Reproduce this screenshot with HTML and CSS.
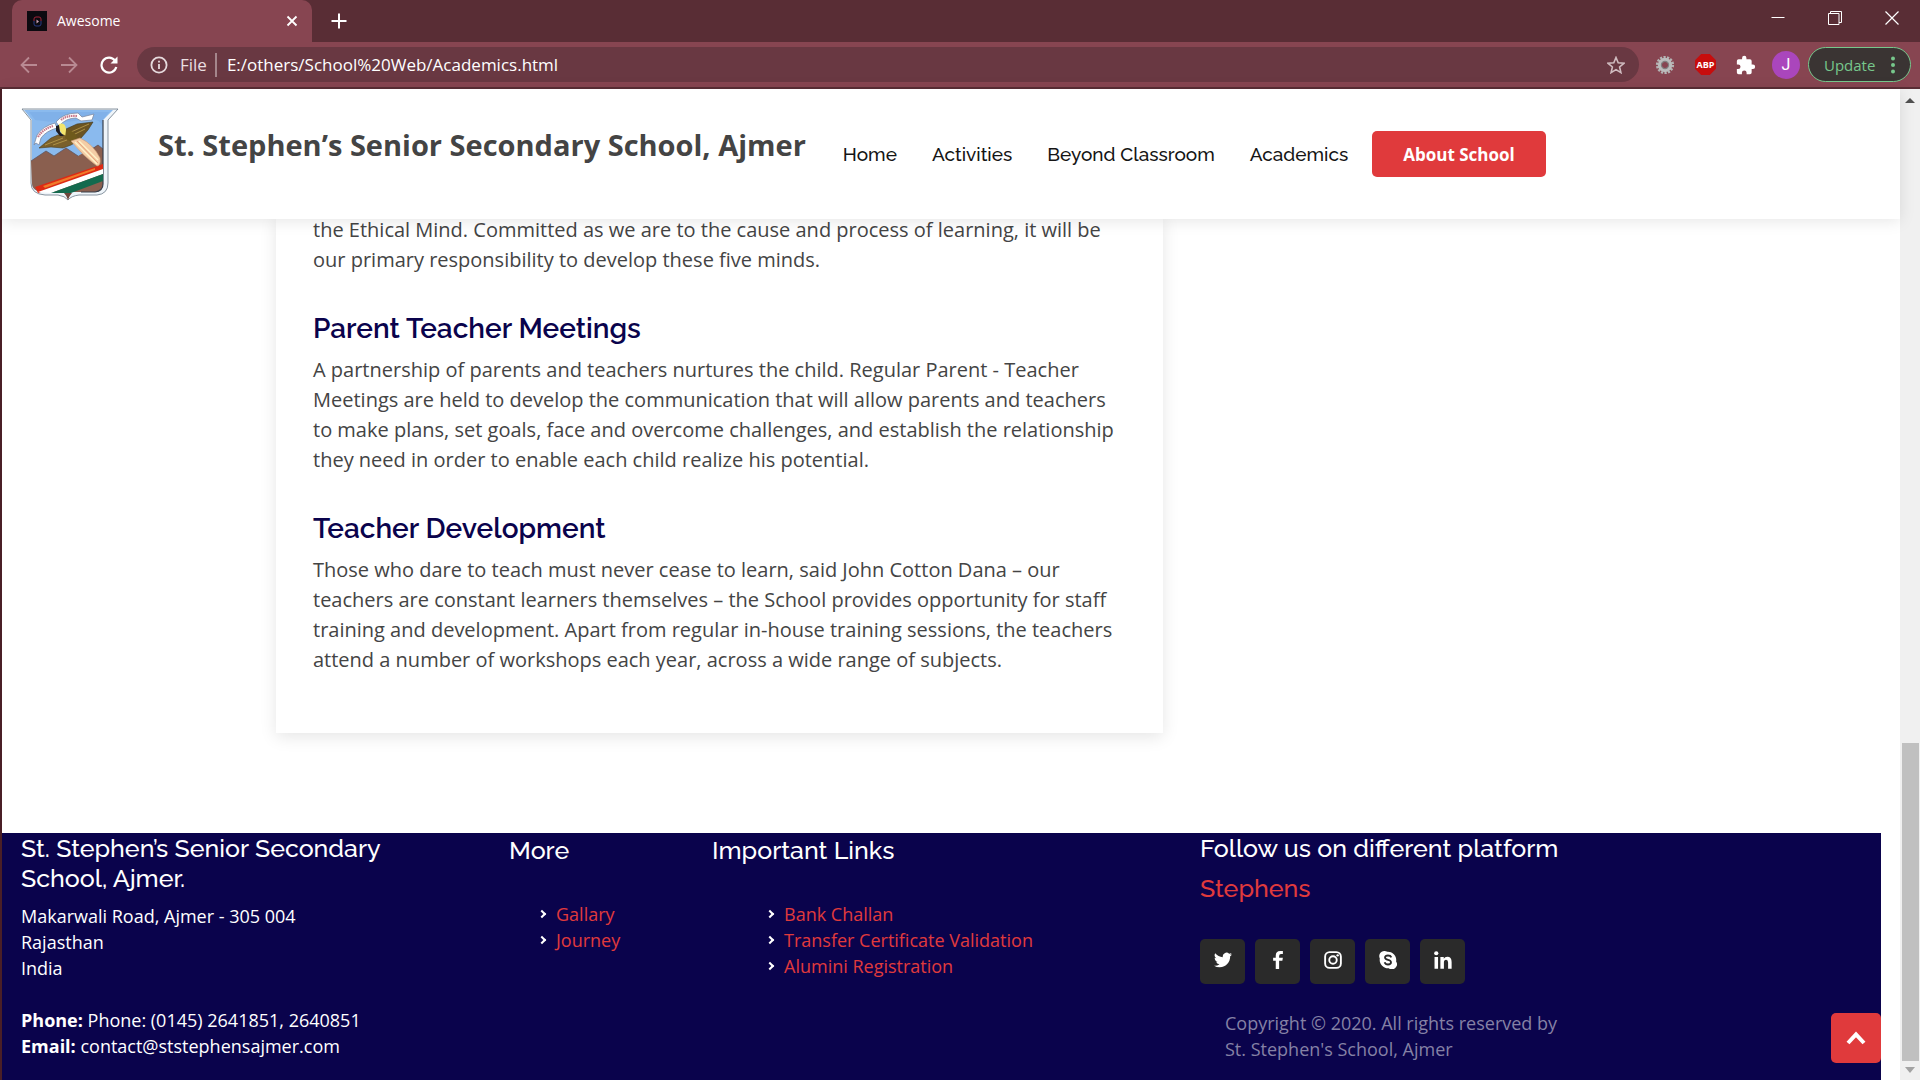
FILE: index.html
```html
<!DOCTYPE html>
<html lang="en">
<head>
<meta charset="utf-8">
<meta name="viewport" content="width=device-width, initial-scale=1">
<title>Awesome</title>
<link rel="stylesheet" href="styles.css">
</head>
<body>
<div class="window">
  <div class="tabstrip">
    <div class="tab">
      <svg class="favicon" viewBox="0 0 20 20" aria-hidden="true"><rect width="20" height="20" fill="#0c0a10"/><path d="M7 10V8q0-2 2-2h3q2 0 2 2v2" fill="none" stroke="#a02438"/><path d="M7 10v3q0 2 2 2h3q2 0 2-2v-3" fill="none" stroke="#273a82"/><path d="M9.500 8.500l2.500 2-2.500 2z" fill="#c8a0b4"/></svg>
      <span class="tab-title">Awesome</span>
      <button class="icon-btn" aria-label="Close tab"><svg width="12" height="12" viewBox="0 0 12 12"><path d="M1.500 1.500l9 9M10.500 1.500l-9 9" stroke="#fff" stroke-width="1.800"/></svg></button>
    </div>
    <button class="icon-btn new-tab" aria-label="New tab"><svg width="16" height="16" viewBox="0 0 16 16"><path d="M8 .5v15M.5 8h15" stroke="#fff" stroke-width="2"/></svg></button>
    <div class="window-controls">
      <button class="icon-btn" aria-label="Minimize"><svg width="14" height="14" viewBox="0 0 14 14"><path d="M.5 6.500h13" stroke="#fff"/></svg></button>
      <button class="icon-btn" aria-label="Restore"><svg width="14" height="14" viewBox="0 0 14 14" fill="none" stroke="#fff"><path d="M.5 2.500h10.500v11H.5zM2.500 2.500v-2h11v11h-2.500"/></svg></button>
      <button class="icon-btn" aria-label="Close"><svg width="14" height="14" viewBox="0 0 14 14"><path d="M.5 .5l13 13M13.500 .5l-13 13" stroke="#fff" stroke-width="1.200"/></svg></button>
    </div>
  </div>

  <div class="toolbar">
    <div class="nav-buttons">
      <button class="icon-btn dim" aria-label="Back"><svg width="18" height="18" viewBox="0 0 18 18"><path d="M17 9H2M9 1.500L1.500 9 9 16.500" fill="none" stroke="currentColor" stroke-width="1.800"/></svg></button>
      <button class="icon-btn dim" aria-label="Forward"><svg width="18" height="18" viewBox="0 0 18 18"><path d="M1 9h15M9 1.500L16.500 9 9 16.500" fill="none" stroke="currentColor" stroke-width="1.800"/></svg></button>
      <button class="icon-btn" aria-label="Reload"><svg width="18" height="18" viewBox="0 0 18 18"><path d="M15 4.500A7.500 7.500 0 1 0 16.300 11" fill="none" stroke="#fff" stroke-width="2.200"/><path d="M17.500 .5v7h-7z" fill="#fff"/></svg></button>
    </div>
    <div class="omnibox">
      <svg width="18" height="18" viewBox="0 0 18 18"><circle cx="9" cy="9" r="7.600" fill="none" stroke="#e6dadd" stroke-width="1.800"/><path d="M9 8v5M9 4.800v1.800" stroke="#e6dadd" stroke-width="1.800"/></svg>
      <label class="scheme" for="address">File</label>
      <input id="address" class="address" type="text" value="E:/others/School%20Web/Academics.html">
      <button class="icon-btn" aria-label="Bookmark"><svg width="18" height="18" viewBox="0 0 18 18"><path d="M9 1.500l2.200 5.300 5.700.5-4.300 3.700 1.300 5.600L9 13.600l-4.900 3 1.300-5.600L1.100 7.300l5.700-.5z" fill="none" stroke="#d0bcc0" stroke-width="1.600"/></svg></button>
    </div>
    <div class="extensions">
      <button class="icon-btn" aria-label="Settings extension"><svg width="20" height="20" viewBox="0 0 20 20"><circle cx="10" cy="10" r="7.800" fill="none" stroke="#b4b4b4" stroke-width="2.600" stroke-dasharray="2.200 1.300"/><circle cx="10" cy="10" r="5.200" fill="none" stroke="#bcbcbc" stroke-width="4"/><circle cx="10" cy="10" r="3.600" fill="none" stroke="#808080" stroke-width="1.200"/></svg></button>
      <button class="icon-btn" aria-label="Adblock Plus"><svg width="21" height="21" viewBox="0 0 21 21"><path d="M6.200 0h8.600L21 6.200v8.600L14.800 21H6.200L0 14.800V6.200z" fill="#c70d0d"/><text class="abp" x="10.500" y="14" text-anchor="middle">ABP</text></svg></button>
      <button class="icon-btn" aria-label="Extensions"><svg width="20" height="20" viewBox="1 0 23 23"><path fill="#fff" d="M20.500 11H19V7a2 2 0 0 0-2-2h-4V3.500a2.500 2.500 0 0 0-5 0V5H4a2 2 0 0 0-2 2v3.800h1.500a2.700 2.700 0 0 1 0 5.400H2V20a2 2 0 0 0 2 2h3.800v-1.500a2.700 2.700 0 0 1 5.400 0V22H17a2 2 0 0 0 2-2v-4h1.500a2.500 2.500 0 0 0 0-5z"/></svg></button>
      <button class="avatar">J</button>
      <button class="update">Update<svg width="4" height="18" viewBox="0 0 4 18" fill="#77c78c"><circle cx="2" cy="2.500" r="2"/><circle cx="2" cy="9" r="2"/><circle cx="2" cy="15.500" r="2"/></svg></button>
    </div>
  </div>

  <div class="viewport">
    <div class="page">
      <header class="site-header">
        <svg class="crest" viewBox="0 0 98 93" aria-label="School crest" role="img">
          <path d="M1 1H97L87 12V75Q87 86 76 87H58Q50 88 47 92Q44 88 37 87H24Q10 86 10 75V12Z" fill="#eef4f9" stroke="#6b7a88" stroke-width=".8"/>
          <path d="M3 2H92L82 12V76Q82 83 74 84H24Q11 84 11 75V12Z" fill="#8abaee"/>
          <path d="M14 12Q40 16 60 12T82 20V12L88 4H8Z" fill="#79abe6" opacity=".6"/>
          <path d="M10 53L25 43 33 48 45 40 57 48 64 44 77 37 82 41V76Q82 83 74 84H24Q11 84 11 75Z" fill="#8a5f4f"/>
          <path d="M10 53L25 43 33 48 45 40 57 48M70 42L77 37 82 41" fill="none" stroke="#5d5560" stroke-width=".8"/>
          <path d="M82 12V76Q82 83 74 84H60" fill="none" stroke="#39404c" stroke-width="1.200"/>
          <path d="M14 79L82 56v6L17 85Z" fill="#dd2a14"/><path d="M22 78L74 60v2L24 80Z" fill="#f07a2a"/>
          <path d="M17 84L82 61v5L30 85Z" fill="#fff"/><path d="M30 85L82 66v7L50 85Z" fill="#146a4e"/>
          <path d="M13 37L16 27Q22 18 34 15L36 20Q25 23 20 30L18 37 15 35Z" fill="#fff" stroke="#7d8ba5" stroke-width=".8"/>
          <path d="M35 14Q42 5 57 5L61 9 73 6 71 12 60 13 55 10Q45 10 38 18Z" fill="#fff" stroke="#7d8ba5" stroke-width=".8"/>
          <path d="M17 29Q22 21 32 18M40 12Q46 7 56 8" fill="none" stroke="#c8788a" stroke-width="2.200" stroke-dasharray="1.500 .7"/>
          <path d="M45 21L56 16 72 14 67 22 60 30 55 34 46 30Z" fill="#6b5422" stroke="#3f351a" stroke-width=".6"/>
          <path d="M44 26L37 27 30 30 18 40 30 39 42 40 50 37 57 33Z" fill="#7a602b" stroke="#4a3c1c" stroke-width=".6"/>
          <path d="M50 24L68 16M52 27L64 21M24 37L42 30M32 37L46 32" stroke="#b3964a" stroke-width=".9"/>
          <path d="M38 16Q44 14 45 21L46 28 41 26 38 21Z" fill="#f3e56c"/>
          <path d="M35 18L38 17 39 24 43 28 39 28 35 23Z" fill="#1e1d22"/>
          <path d="M45 22Q54 22 56 30L50 34 44 30Z" fill="#6f5a1c"/>
          <path d="M50 33L59 30Q72 36 79 50 80 58 76 58 62 48 50 33Z" fill="#f4cda6" stroke="#c99972" stroke-width=".6"/>
          <path d="M54 34L76 56M58 33L77 52" stroke="#fff3c8" stroke-width="1.400"/><path d="M56 33L77 55" stroke="#e0936e" stroke-width=".8"/>
          <path d="M43 85H51Q48 88 47 92 46 88 43 85Z" fill="#6e463c"/>
        </svg>
        <h1 class="site-title">St. Stephen’s Senior Secondary School, Ajmer</h1>
        <nav class="site-nav">
          <a href="#">Home</a><a href="#">Activities</a><a href="#">Beyond Classroom</a><a href="#">Academics</a>
        </nav>
        <a class="about" href="#">About School</a>
      </header>

      <main class="content">
        <article class="card">
          <p>the Ethical Mind. Committed as we are to the cause and process of learning, it will be our primary responsibility to develop these five minds.</p>
          <h2>Parent Teacher Meetings</h2>
          <p>A partnership of parents and teachers nurtures the child. Regular Parent - Teacher Meetings are held to develop the communication that will allow parents and teachers to make plans, set goals, face and overcome challenges, and establish the relationship they need in order to enable each child realize his potential.</p>
          <h2>Teacher Development</h2>
          <p>Those who dare to teach must never cease to learn, said John Cotton Dana – our teachers are constant learners themselves – the School provides opportunity for staff training and development. Apart from regular in-house training sessions, the teachers attend a number of workshops each year, across a wide range of subjects.</p>
        </article>
      </main>

      <footer class="footer">
        <section>
          <h3>St. Stephen’s Senior Secondary<br>School, Ajmer.</h3>
          <address>Makarwali Road, Ajmer - 305 004<br>Rajasthan<br>India<br><br><strong>Phone:</strong> Phone: (0145) 2641851, 2640851<br><strong>Email:</strong> contact@ststephensajmer.com</address>
        </section>
        <section class="link-col">
          <h3>More</h3>
          <ul>
            <li><a href="#">Gallary</a></li>
            <li><a href="#">Journey</a></li>
          </ul>
        </section>
        <section class="link-col wide">
          <h3>Important Links</h3>
          <ul>
            <li><a href="#">Bank Challan</a></li>
            <li><a href="#">Transfer Certificate Validation</a></li>
            <li><a href="#">Alumini Registration</a></li>
          </ul>
        </section>
        <section>
          <h3>Follow us on different platform</h3>
          <h3 class="brand"><a href="#">Stephens</a></h3>
          <div class="social">
            <a href="#" aria-label="Twitter"><svg viewBox="0 0 24 24"><path d="M23.950 4.570a10 10 0 0 1-2.820.770 4.960 4.960 0 0 0 2.160-2.720 9.900 9.900 0 0 1-3.120 1.190 4.920 4.920 0 0 0-8.380 4.480C7.690 8.100 4.070 6.130 1.640 3.160a4.920 4.920 0 0 0 1.520 6.570 4.900 4.900 0 0 1-2.230-.610v.060a4.920 4.920 0 0 0 3.950 4.830 5 5 0 0 1-2.210.080 4.940 4.940 0 0 0 4.600 3.420A9.870 9.870 0 0 1 0 19.540a13.990 13.990 0 0 0 7.550 2.210c9.050 0 14-7.500 14-13.980 0-.210 0-.420-.020-.630a9.940 9.940 0 0 0 2.420-2.570z"/></svg></a>
            <a href="#" aria-label="Facebook"><svg viewBox="0 0 24 24"><path d="M9 24V13H5.500V9H9V6q0-6 6-6h3.500v4H16q-2.500 0-2.500 2.500V9h5l-.7 4h-4.300v11z"/></svg></a>
            <a href="#" aria-label="Instagram"><svg viewBox="0 0 24 24"><rect x="1.500" y="1.500" width="21" height="21" rx="6" fill="none" stroke="#fff" stroke-width="2.500"/><circle cx="12" cy="12" r="5" fill="none" stroke="#fff" stroke-width="2.500"/><circle cx="18.200" cy="5.800" r="1.600"/></svg></a>
            <a href="#" aria-label="Skype"><svg viewBox="0 0 24 24"><path d="M7 0a7 7 0 0 1 4 1.100A11 11 0 0 1 22.800 14 6.700 6.700 0 0 1 13 22.900 11 11 0 0 1 1.100 10 6.800 6.800 0 0 1 7 0z"/><path d="M16.500 8.500q-1-2.500-4.500-2.500-4 0-4 2.800 0 2.200 4 3t4 3.200q0 3-4 3-3.500 0-4.500-3" fill="none" stroke="#2a2a2a" stroke-width="2.400"/></svg></a>
            <a href="#" aria-label="LinkedIn"><svg viewBox="0 0 24 24"><circle cx="3" cy="3" r="2.800"/><path d="M.7 8h4.700v15.500H.7zM8.500 8H13v2.200q1.500-2.600 4.700-2.600 5.800 0 5.800 6.900v9h-4.700v-8.200q0-3.600-2.700-3.600-2.900 0-2.900 3.600v8.200H8.500z"/></svg></a>
          </div>
          <p class="copyright">Copyright © 2020. All rights reserved by<br>St. Stephen's School, Ajmer</p>
        </section>
      </footer>
      <button class="to-top" aria-label="Back to top"><svg width="20" height="14" viewBox="0 0 20 14"><path d="M2 12l8-8.500L18 12" fill="none" stroke="#fff" stroke-width="4"/></svg></button>
    </div>
    <div class="scrollbar" aria-hidden="true">
      <svg width="10" height="6" viewBox="0 0 10 6"><path d="M5 0l5 5H0z" fill="#505050"/></svg>
      <div class="thumb"></div>
      <svg width="10" height="6" viewBox="0 0 10 6"><path d="M5 6L0 0h10z" fill="#a3a3a3"/></svg>
    </div>
  </div>
</div>
</body>
</html>
```
FILE: styles.css
```css
*, *::before, *::after { box-sizing: border-box; }
body { margin: 0; font-family: "Open Sans", sans-serif; color: #444; }
h1, h2, h3, p, ul { margin: 0; padding: 0; }
a { text-decoration: none; }
button { border: 0; padding: 0; background: none; font: inherit; cursor: pointer; }

.window {
  display: flex;
  flex-direction: column;
  min-height: 100vh;
  background: #592d35;
}
.icon-btn { display: flex; align-items: center; justify-content: center; color: #fff; }
.icon-btn.dim { color: #b98a93; }

/* Tab strip */
.tabstrip { display: flex; align-items: center; height: 42px; padding-left: 12px; }
.tab {
  display: flex;
  align-items: center;
  width: 300px;
  height: 42px;
  padding: 0 14px 0 15px;
  border-radius: 10px 10px 0 0;
  background: #874551;
  color: #fff;
}
.favicon { width: 20px; height: 20px; }
.tab-title { flex: 1; margin-left: 10px; font-size: 14px; line-height: 20px; }
.new-tab { margin-left: 19px; }
.window-controls { display: flex; gap: 43px; margin-left: auto; padding: 0 21px 6px 0; }

/* Toolbar */
.toolbar {
  display: flex;
  align-items: center;
  height: 47px;
  padding: 0 9px 0 20px;
  border-bottom: 2px solid #592d35;
  background: #874551;
}
.nav-buttons { display: flex; gap: 22px; margin-right: 19px; }
.omnibox {
  display: flex;
  flex: 1;
  align-items: center;
  height: 35px;
  padding: 0 14px 0 13px;
  border-radius: 18px;
  background: #693842;
}
.scheme {
  margin-left: 12px;
  padding-right: 8px;
  border-right: 2px solid #a5868c;
  color: #e9dfe1;
  font-size: 17px;
  line-height: 24px;
}
.address {
  flex: 1;
  min-width: 0;
  padding: 0 0 0 10px;
  border: 0;
  background: none;
  color: #fff;
  font: 17px "Open Sans", sans-serif;
}
.extensions { display: flex; align-items: center; gap: 20px; margin-left: 16px; }
.abp { fill: #fff; font: bold 9px "Open Sans", sans-serif; }
.avatar {
  width: 28px;
  height: 28px;
  margin-left: -4px;
  border-radius: 50%;
  background: #aa46bc;
  color: #fff;
  font: 16px/28px Roboto, sans-serif;
}
.update {
  display: flex;
  align-items: center;
  justify-content: space-between;
  width: 103px;
  height: 35px;
  margin-left: -12px;
  padding: 0 15px;
  border: 1px solid #77c78c;
  border-radius: 18px;
  background: #3a3433;
  color: #77c78c;
  font-size: 15px;
  line-height: 20px;
}

/* Page area */
.viewport {
  display: grid;
  flex: 1;
  grid-template-columns: minmax(0, 1fr) 20px;
  border-left: 2px solid #4a1f26;
  background: #fff;
}
.page { position: relative; display: flex; flex-direction: column; }
.site-header {
  position: relative;
  z-index: 1;
  display: flex;
  align-items: center;
  height: 130px;
  padding-left: 19px;
  background: #fff;
  box-shadow: 0 2px 15px rgba(0, 0, 0, .1);
}
.crest { width: 98px; height: 93px; }
.site-title { margin-left: 39px; padding-bottom: 18px; font-size: 29px; line-height: 34px; white-space: nowrap; }
.site-nav { display: flex; gap: 35px; margin-left: 37px; }
.site-nav a { color: #151515; font: 500 19px Raleway, Lato, sans-serif; white-space: nowrap; }
.about {
  margin-left: 24px;
  padding: 11px 31px 9px;
  border-radius: 5px;
  background: #e03a3c;
  color: #fff;
  font-size: 17px;
  font-weight: 700;
  line-height: 26px;
  white-space: nowrap;
}

.content { margin-top: -4px; padding: 0 274px 100px; }
.card {
  max-width: 887px;
  padding: 0 37px 58px;
  box-shadow: 0 4px 16px rgba(0, 0, 0, .1);
  font-size: 20px;
  line-height: 30px;
}
.card h2 {
  margin: 37px 0 9px;
  color: #0a034c;
  font: 600 28px/34px Raleway, Lato, sans-serif;
}

/* Footer */
.footer {
  display: grid;
  flex: 1;
  grid-template-columns: 488fr 203fr 488fr 681fr;
  margin-right: 19px;
  padding-left: 19px;
  background: #0a034c;
  color: #fff;
  font-size: 18px;
  line-height: 26px;
}
.footer h3 { font: 500 25px/30px Raleway, Lato, sans-serif; }
.footer a { color: #e03a3c; }
.footer address { margin-top: 10px; font-style: normal; }
.link-col { padding-top: 2px; }
.link-col ul { margin-top: 36px; padding-left: 30px; list-style: none; }
.link-col.wide ul { padding-left: 55px; }
.link-col li { display: flex; align-items: center; gap: 11px; }
.link-col li::before {
  content: "";
  width: 6px;
  height: 6px;
  border: solid #fff;
  border-width: 2px 2px 0 0;
  transform: rotate(45deg);
}
.footer .brand { margin-top: 10px; }
.social { display: flex; gap: 10px; margin-top: 36px; }
.social a {
  display: flex;
  align-items: center;
  justify-content: center;
  width: 45px;
  height: 45px;
  padding-bottom: 3px;
  border-radius: 5px;
  background: #2a2a2a;
}
.social svg { width: 18px; height: 18px; fill: #fff; }
.copyright { margin: 26px 0 0 25px; color: #8581a5; }

.to-top {
  position: absolute;
  right: 19px;
  bottom: 17px;
  display: flex;
  align-items: center;
  justify-content: center;
  width: 50px;
  height: 50px;
  border-radius: 5px;
  background: #e03a3c;
}

/* Scrollbar */
.scrollbar {
  display: flex;
  flex-direction: column;
  align-items: center;
  padding: 9px 0 7px;
  background: #f0f0f0;
}
.thumb { width: 17px; height: 318px; margin: auto 0 6px; background: #c0c0c0; }
```
